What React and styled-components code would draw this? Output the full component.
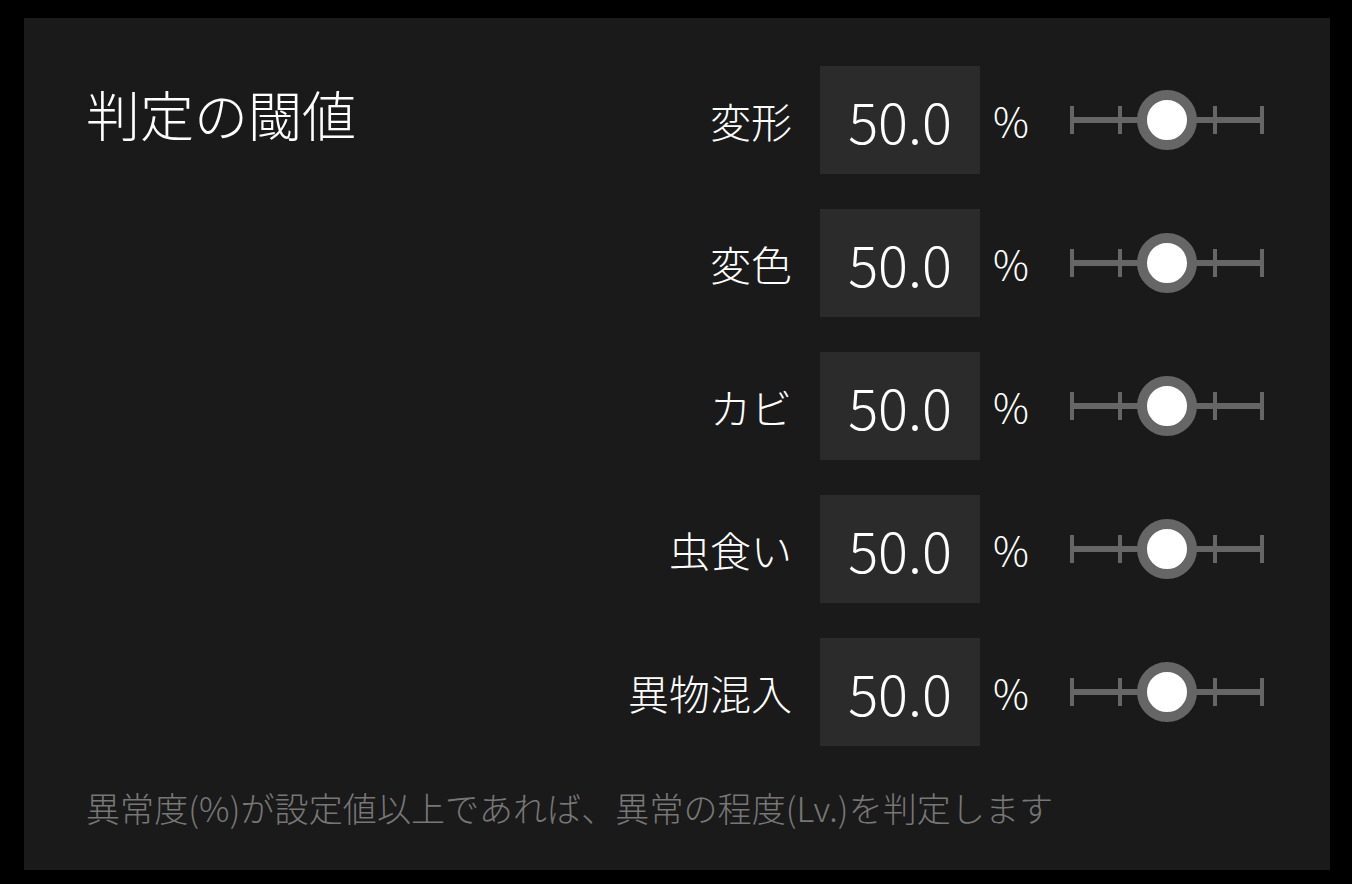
import React from 'react';
import styled, { createGlobalStyle } from 'styled-components';

const GlobalStyle = createGlobalStyle`
  html, body {
    margin: 0;
    padding: 0;
    background: #000;
  }
  body {
    font-family: "Noto Sans CJK JP", "Noto Sans", sans-serif;
    font-weight: 300;
  }
`;

const Screen = styled.div`
  width: 1352px;
  height: 884px;
  box-sizing: border-box;
  padding: 18px 22px 14px 24px;
  background: #000;
`;

const Panel = styled.div`
  height: 100%;
  box-sizing: border-box;
  background: #1a1a1a;
  padding: 48px 66px 0 62px;
  display: flex;
  flex-direction: column;
`;

const Top = styled.div`
  display: flex;
  justify-content: space-between;
  align-items: flex-start;
`;

const Title = styled.h1`
  margin: 16px 0 0;
  font-size: 54px;
  font-weight: 300;
  line-height: 1.2;
  color: #fff;
`;

const Rows = styled.div`
  display: flex;
  flex-direction: column;
  gap: 35px;
`;

const Row = styled.div`
  display: flex;
  align-items: center;
  justify-content: flex-end;
`;

const Label = styled.span`
  font-size: 41px;
  line-height: 1;
  color: #fff;
  margin-right: 28px;
`;

const ValueBox = styled.div`
  width: 160px;
  height: 108px;
  background: #2b2b2b;
  display: flex;
  align-items: center;
  justify-content: center;
  font-size: 56px;
  line-height: 1;
  color: #fff;
`;

const Unit = styled.span`
  font-size: 40px;
  line-height: 1;
  color: #fff;
  margin-left: 13px;
  margin-right: 41px;
`;

const Slider = styled.div`
  position: relative;
  width: 194px;
  height: 60px;
`;

const Track = styled.div`
  position: absolute;
  left: 0;
  right: 0;
  top: 27px;
  height: 6px;
  background: #666;
`;

const Tick = styled.div`
  position: absolute;
  top: 16px;
  width: 4px;
  height: 28px;
  margin-left: -2px;
  background: #666;
`;

const Thumb = styled.div`
  position: absolute;
  top: 0;
  width: 60px;
  height: 60px;
  margin-left: -30px;
  box-sizing: border-box;
  border-radius: 50%;
  border: 10px solid #666;
  background: #fff;
`;

const Note = styled.p`
  margin: 38px 0 0;
  font-size: 34px;
  line-height: 1.4;
  letter-spacing: 0.1px;
  color: #777;
`;

const rows = [
  { label: '変形', value: 50 },
  { label: '変色', value: 50 },
  { label: 'カビ', value: 50 },
  { label: '虫食い', value: 50 },
  { label: '異物混入', value: 50 },
];

const ThresholdSlider = ({ value }) => (
  <Slider>
    <Track />
    {[0, 25, 75, 100].map((p) => (
      <Tick key={p} style={{ left: `${2 + (p / 100) * 190}px` }} />
    ))}
    <Thumb style={{ left: `${2 + (value / 100) * 190}px` }} />
  </Slider>
);

export default function App() {
  return (
    <>
      <GlobalStyle />
      <Screen>
        <Panel>
          <Top>
            <Title>判定の閾値</Title>
            <Rows>
              {rows.map((r) => (
                <Row key={r.label}>
                  <Label>{r.label}</Label>
                  <ValueBox>{r.value.toFixed(1)}</ValueBox>
                  <Unit>%</Unit>
                  <ThresholdSlider value={r.value} />
                </Row>
              ))}
            </Rows>
          </Top>
          <Note>異常度(%)が設定値以上であれば、異常の程度(Lv.)を判定します</Note>
        </Panel>
      </Screen>
    </>
  );
}
